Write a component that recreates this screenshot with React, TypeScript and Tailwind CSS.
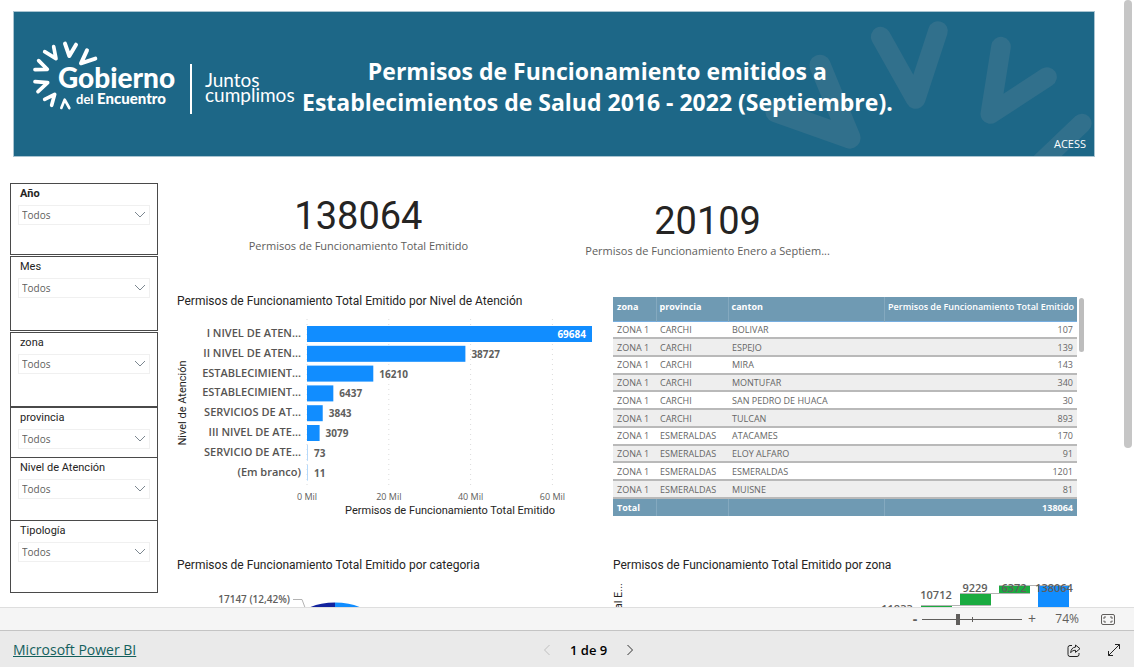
import { useState } from "react";
import { clsx } from "clsx";

interface Slicer {
  id: string;
  label: string;
  height: string;
  bold?: boolean;
}

const SLICERS: Slicer[] = [
  { id: "anio", label: "Año", height: "h-[72px] mb-px", bold: true },
  { id: "mes", label: "Mes", height: "h-[75px] mb-px" },
  { id: "zona", label: "zona", height: "h-[75px]" },
  { id: "provincia", label: "provincia", height: "h-[50px] border-b-0" },
  { id: "nivel", label: "Nivel de Atención", height: "h-[63px] border-b-0" },
  { id: "tipologia", label: "Tipología", height: "h-[73px]" },
];

const NIVELES = [
  { label: "I NIVEL DE ATEN...", value: 69684 },
  { label: "II NIVEL DE ATEN...", value: 38727 },
  { label: "ESTABLECIMIENT...", value: 16210 },
  { label: "ESTABLECIMIENT...", value: 6437 },
  { label: "SERVICIOS DE AT...", value: 3843 },
  { label: "III NIVEL DE ATE...", value: 3079 },
  { label: "SERVICIO DE ATE...", value: 73 },
  { label: "(Em branco)", value: 11 },
];

const CANTONES = [
  ["ZONA 1", "CARCHI", "BOLIVAR", 107],
  ["ZONA 1", "CARCHI", "ESPEJO", 139],
  ["ZONA 1", "CARCHI", "MIRA", 143],
  ["ZONA 1", "CARCHI", "MONTUFAR", 340],
  ["ZONA 1", "CARCHI", "SAN PEDRO DE HUACA", 30],
  ["ZONA 1", "CARCHI", "TULCAN", 893],
  ["ZONA 1", "ESMERALDAS", "ATACAMES", 170],
  ["ZONA 1", "ESMERALDAS", "ELOY ALFARO", 91],
  ["ZONA 1", "ESMERALDAS", "ESMERALDAS", 1201],
  ["ZONA 1", "ESMERALDAS", "MUISNE", 81],
];

function Logo() {
  return (
    <svg
      viewBox="0 0 300 144"
      className="h-[144px] w-[300px] shrink-0 font-[Lato,sans-serif]"
      fill="#fff"
      role="img"
      aria-label="Gobierno del Encuentro"
    >
      <g
        transform="translate(-14 -12) scale(0.3333)"
        fill="none"
        stroke="#fff"
        strokeWidth="11"
        strokeLinecap="round"
        strokeLinejoin="round"
      >
        <path d="M195 131 208 168 228 134" strokeWidth="12" />
        <path d="M261 151 243 190 286 176" strokeWidth="12" />
        <path d="M161 140 168 176 134 155" />
        <path d="M116 182 142 208 105 209" />
        <path d="M105 245 143 248 114 275" />
        <path d="M134 298 164 283 155 316" />
        <path d="M184 324 194 299 208 324" strokeWidth="8" />
      </g>
      <text x="44" y="76" fontSize="28" fontWeight="900">
        Gobierno
      </text>
      <text x="62" y="92" fontSize="13" fontWeight="700">
        del
      </text>
      <text x="83" y="92" fontSize="15" fontWeight="900">
        Encuentro
      </text>
      <rect x="176" y="52" width="2" height="50" />
      <g fontSize="19">
        <text x="191" y="75">
          Juntos
        </text>
        <text x="191" y="90">
          cumplimos
        </text>
      </g>
    </svg>
  );
}

function Banner() {
  return (
    <header className="relative mr-[29px] ml-[13px] flex h-[146px] overflow-hidden border border-[#a9c4d1] bg-[#1d6787] text-white">
      <svg
        viewBox="0 36 1065 432"
        className="absolute top-0 right-0 h-full w-[355px]"
        fill="none"
        stroke="#31708c"
        strokeLinecap="round"
        strokeLinejoin="round"
        aria-hidden="true"
      >
        <path d="M243 196 333 415 111 335Z" stroke="none" />
        <path d="M243 196 333 414 111 335" strokeWidth="64" />
        <path d="M425 110 530 297 597 93" strokeWidth="59" />
        <path d="M786 140 754 342 924 231" strokeWidth="59" />
        <path d="M1029 370 903 490" strokeWidth="58" />
      </svg>
      <div className="relative">
        <Logo />
      </div>
      <h1 className="relative mt-[44px] -ml-3 text-center text-[23px] leading-[31px] font-bold whitespace-nowrap">
        Permisos de Funcionamiento emitidos a
        <br />
        Establecimientos de Salud 2016 - 2022 (Septiembre).
      </h1>
      <span className="absolute right-2 bottom-1 text-[11px] leading-4">ACESS</span>
    </header>
  );
}

function SlicerBox({ slicer }: { slicer: Slicer }) {
  return (
    <div className={clsx("border border-[#4a4a4a] px-[7px] pt-[3px]", slicer.height)}>
      <label
        htmlFor={slicer.id}
        className={clsx(
          "block px-[2px] font-[Roboto,sans-serif] text-[11px] leading-[14px] text-[#252423]",
          slicer.bold && "font-bold"
        )}
      >
        {slicer.label}
      </label>
      <div className="relative mt-1">
        <select
          id={slicer.id}
          className="block h-5 w-full appearance-none border border-[#f0f0f0] bg-white px-[3px] text-[10px] text-[#605e5c]"
        >
          <option>Todos</option>
        </select>
        <svg
          viewBox="0 0 12 7"
          className="pointer-events-none absolute top-[6px] right-1 h-[7px] w-3"
          fill="none"
          stroke="#7c8790"
          aria-hidden="true"
        >
          <path d="M1 1l5 5 5-5" />
        </svg>
      </div>
    </div>
  );
}

function Kpi({ value, label, className }: { value: string; label: string; className: string }) {
  return (
    <div className={clsx("flex flex-col items-center justify-center", className)}>
      <p className="font-[Roboto,sans-serif] text-[38px] leading-10 text-[#252423]">{value}</p>
      <p className="text-[11px] leading-5 text-[#605e5c]">{label}</p>
    </div>
  );
}

function ChartTitle({ children }: { children: string }) {
  return (
    <h2 className="font-[Roboto,sans-serif] text-[12px] leading-4 whitespace-nowrap text-[#252423]">
      {children}
    </h2>
  );
}

function NivelChart() {
  const x0 = 130;
  const scale = 285 / 69684;

  return (
    <svg viewBox="0 0 416 211" className="block w-full" role="img" aria-label="Nivel de Atención">
      {[0, 20, 40, 60].map((mil) => {
        const x = x0 + mil * 1000 * scale;
        return (
          <g key={mil}>
            <line x1={x} x2={x} y1="10" y2="180" stroke="#dcdcdc" strokeDasharray="1 4" />
            <text x={x} y="191" fontSize="9" fill="#605e5c" textAnchor="middle">
              {mil} Mil
            </text>
          </g>
        );
      })}
      {NIVELES.map(({ label, value }, i) => {
        const y = 17 + i * 19.8;
        const width = Math.max(value * scale, 1);
        const inside = i === 0;
        return (
          <g key={i} fontSize="11" fontWeight="600">
            <rect
              x={x0}
              y={y}
              width={width}
              height="16"
              fill={value < 100 ? "#b5d9fb" : "#118dff"}
            />
            <text x={x0 - 6} y={y + 11} fill="#565452" textAnchor="end">
              {label}
            </text>
            <text
              x={inside ? x0 + width - 6 : x0 + width + 6}
              y={y + 12}
              fontSize="10"
              fontWeight="700"
              fill={inside ? "#fff" : "#605e5c"}
              textAnchor={inside ? "end" : "start"}
            >
              {value}
            </text>
          </g>
        );
      })}
      <g fontFamily="Roboto, sans-serif" fontSize="11" fill="#252423" textAnchor="middle">
        <text x="273" y="205">
          Permisos de Funcionamiento Total Emitido
        </text>
        <text transform="translate(9 94) rotate(-90)">Nivel de Atención</text>
      </g>
    </svg>
  );
}

function CantonTable() {
  return (
    <div className="flex gap-[2px] pt-1">
      <table className="h-[219px] flex-1 table-fixed border-collapse text-[9px] leading-3 text-[#666]">
        <colgroup>
          <col className="w-[43px]" />
          <col className="w-[72px]" />
          <col />
          <col className="w-[192px]" />
        </colgroup>
        <thead>
          <tr className="h-6 border-b border-[#77aee0] bg-[#6f9ab3] text-left text-white">
            <th className="px-1 pb-[3px] font-bold">zona</th>
            <th className="border-l border-[#84a9bf] px-[3px] pb-[3px] font-bold">provincia</th>
            <th className="border-l border-[#84a9bf] px-[3px] pb-[3px] font-bold">canton</th>
            <th className="border-l border-[#84a9bf] px-[3px] pb-[3px] text-right font-semibold whitespace-nowrap">
              Permisos de Funcionamiento Total Emitido
            </th>
          </tr>
        </thead>
        <tbody>
          {CANTONES.map(([zona, provincia, canton, total]) => (
            <tr key={canton} className="border-b-2 border-[#b9b9b9] even:bg-[#eee]">
              <td className="px-1 pt-px whitespace-nowrap">{zona}</td>
              <td className="px-1 pt-px">{provincia}</td>
              <td className="px-1 pt-px">{canton}</td>
              <td className="px-1 pt-px text-right">{total}</td>
            </tr>
          ))}
        </tbody>
        <tfoot>
          <tr className="h-[18px] bg-[#6f9ab3] font-bold text-white">
            <td className="px-1">Total</td>
            <td className="border-l border-[#84a9bf]" />
            <td className="border-l border-[#84a9bf]" />
            <td className="border-l border-[#84a9bf] px-1 text-right">138064</td>
          </tr>
        </tfoot>
      </table>
      <div className="mt-px h-[54px] w-[5px] rounded-full bg-[#bdbdbd]" />
    </div>
  );
}

function CategoriaChart() {
  return (
    <svg viewBox="0 0 416 180" className="block w-full" role="img" aria-label="categoria">
      <path d="M158 29.5a69 69 0 0 0-69 69a69 69 0 0 0 69 69z" fill="#12239e" />
      <path d="M158 29.5a69 69 0 0 1 69 69a69 69 0 0 1-69 69z" fill="#118dff" />
      <path d="M116 26.500h9l3 8" fill="none" stroke="#b3b3b3" />
      <text x="113" y="30" fontSize="10" fontWeight="600" fill="#605e5c" textAnchor="end">
        17147 (12,42%)
      </text>
    </svg>
  );
}

function ZonaChart() {
  return (
    <svg viewBox="0 0 471 180" className="block w-full" role="img" aria-label="zona">
      <g fill="#1aab40">
        <rect x="308" y="32" width="31" height="16" />
        <rect x="347" y="21" width="31" height="11" />
        <rect x="386" y="12" width="31" height="9" />
      </g>
      <rect x="425" y="12" width="31" height="168" fill="#118dff" />
      <path d="M308 32.500h70M347 20.500h70M386 12.500h70" stroke="#b3b3b3" />
      <g fontSize="11" fontWeight="600" fill="#605e5c" textAnchor="middle">
        <text x="284" y="40">
          11833
        </text>
        <text x="323" y="26">
          10712
        </text>
        <text x="362" y="19">
          9229
        </text>
        <text x="401" y="19">
          6372
        </text>
        <text x="441" y="19">
          138064
        </text>
      </g>
      <text
        transform="translate(9 10) rotate(-90)"
        fontFamily="Roboto, sans-serif"
        fontSize="11"
        fill="#252423"
        textAnchor="end"
      >
        Permisos Total E...
      </text>
    </svg>
  );
}

function ZoomBar() {
  const [zoom, setZoom] = useState(35);

  return (
    <div className="flex h-6 shrink-0 items-center justify-end border-t border-b border-t-[#dedede] border-b-[#c4c4c4] bg-[#f5f5f5] pr-[19px] text-[#605e5c]">
      <button
        type="button"
        aria-label="Reducir"
        className="w-[14px] text-[14px] leading-5 font-bold"
        onClick={() => setZoom(Math.max(0, zoom - 5))}
      >
        -
      </button>
      <div className="relative flex h-5 w-[100px] items-center">
        <div className="absolute top-2 left-1/2 h-[5px] w-px bg-[#605e5c]" />
        <input
          type="range"
          aria-label="Zoom"
          value={zoom}
          onChange={(event) => setZoom(Number(event.target.value))}
          className="h-px w-full appearance-none bg-[#605e5c] [&::-webkit-slider-thumb]:h-[11px] [&::-webkit-slider-thumb]:w-1 [&::-webkit-slider-thumb]:appearance-none [&::-webkit-slider-thumb]:bg-[#605e5c]"
        />
      </div>
      <button
        type="button"
        aria-label="Ampliar"
        className="w-5 text-[14px] leading-5"
        onClick={() => setZoom(Math.min(100, zoom + 5))}
      >
        +
      </button>
      <span className="w-[37px] text-right text-[12px] leading-5">74%</span>
      <button type="button" aria-label="Ajustar a la página" className="ml-[22px]">
        <svg viewBox="0 0 14 11" className="h-[11px] w-[14px]" fill="none" stroke="currentColor">
          <rect x=".5" y=".5" width="13" height="10" rx="1.500" />
          <path d="M3 5V3h2M9 3h2v2M11 6.500V8H9M5 8H3V6.500" />
        </svg>
      </button>
    </div>
  );
}

function Footer() {
  return (
    <footer className="flex h-9 shrink-0 items-center justify-between bg-[#eaeaea] px-[13px] pt-[2px]">
      <a href="#powerbi" className="text-[14px] leading-5 text-[#13605d] underline">
        Microsoft Power BI
      </a>
      <nav className="flex items-center gap-[18px]">
        <button type="button" aria-label="Página anterior" disabled className="text-[#c0c0c0]">
          <svg viewBox="0 0 10 12" className="h-3 w-[10px]" fill="none" stroke="currentColor">
            <path d="M7.500 1 2.500 6l5 5" />
          </svg>
        </button>
        <span className="text-[13px] leading-5 font-semibold text-black">1 de 9</span>
        <button type="button" aria-label="Página siguiente" className="text-[#333]">
          <svg viewBox="0 0 10 12" className="h-3 w-[10px]" fill="none" stroke="currentColor">
            <path d="M2.500 1l5 5-5 5" />
          </svg>
        </button>
      </nav>
      <div className="flex items-center gap-[26px] pl-[26px] text-[#222]">
        <button type="button" aria-label="Compartir">
          <svg viewBox="0 0 14 13" className="h-[13px] w-[14px]" fill="none" stroke="currentColor">
            <path d="M5 1.500H3a2 2 0 0 0-2 2v7a2 2 0 0 0 2 2h7a2 2 0 0 0 2-2V9" />
            <path
              d="M8.500 1 13 4.700 8.500 8.400V6.300C6.300 6.300 4.800 7 3.700 8.700 3.900 5.500 5.500 3.300 8.500 3.100z"
              strokeLinejoin="round"
            />
          </svg>
        </button>
        <button type="button" aria-label="Pantalla completa">
          <svg viewBox="0 0 14 14" className="h-[14px] w-[14px]" fill="none" stroke="currentColor">
            <path d="M1.500 12.500l11-11M8 1.500h4.500V6M1.500 8v4.500H6" />
          </svg>
        </button>
      </div>
    </footer>
  );
}

export default function App() {
  return (
    <div className="flex h-screen flex-col overflow-hidden bg-white font-['Open_Sans',sans-serif]">
      <main className="flex min-h-0 flex-1 overflow-hidden pr-[2px]">
        <div className="min-w-0 flex-1 pt-[11px]">
          <Banner />
          <div className="mt-[26px] flex pr-10 pl-[10px]">
            <aside className="mr-[19px] w-[148px] shrink-0">
              {SLICERS.map((slicer) => (
                <SlicerBox key={slicer.id} slicer={slicer} />
              ))}
            </aside>
            <div className="min-w-0 flex-1">
              <div className="flex h-[110px] items-start">
                <Kpi
                  value="138064"
                  label="Permisos de Funcionamiento Total Emitido"
                  className="h-[86px] w-2/5"
                />
                <Kpi
                  value="20109"
                  label="Permisos de Funcionamiento Enero a Septiem..."
                  className="h-24 w-[37%]"
                />
              </div>
              <div className="grid grid-cols-[416fr_471fr] gap-x-5">
                <section className="min-w-0">
                  <ChartTitle>
                    Permisos de Funcionamiento Total Emitido por Nivel de Atención
                  </ChartTitle>
                  <NivelChart />
                </section>
                <section className="min-w-0">
                  <CantonTable />
                </section>
                <section className="min-w-0 pt-[37px]">
                  <ChartTitle>Permisos de Funcionamiento Total Emitido por categoria</ChartTitle>
                  <CategoriaChart />
                </section>
                <section className="min-w-0 pt-[37px]">
                  <ChartTitle>Permisos de Funcionamiento Total Emitido por zona</ChartTitle>
                  <ZonaChart />
                </section>
              </div>
            </div>
          </div>
        </div>
        <div className="h-[448px] w-2 shrink-0 rounded-full bg-[#c6c6c6]" />
      </main>
      <ZoomBar />
      <Footer />
    </div>
  );
}
